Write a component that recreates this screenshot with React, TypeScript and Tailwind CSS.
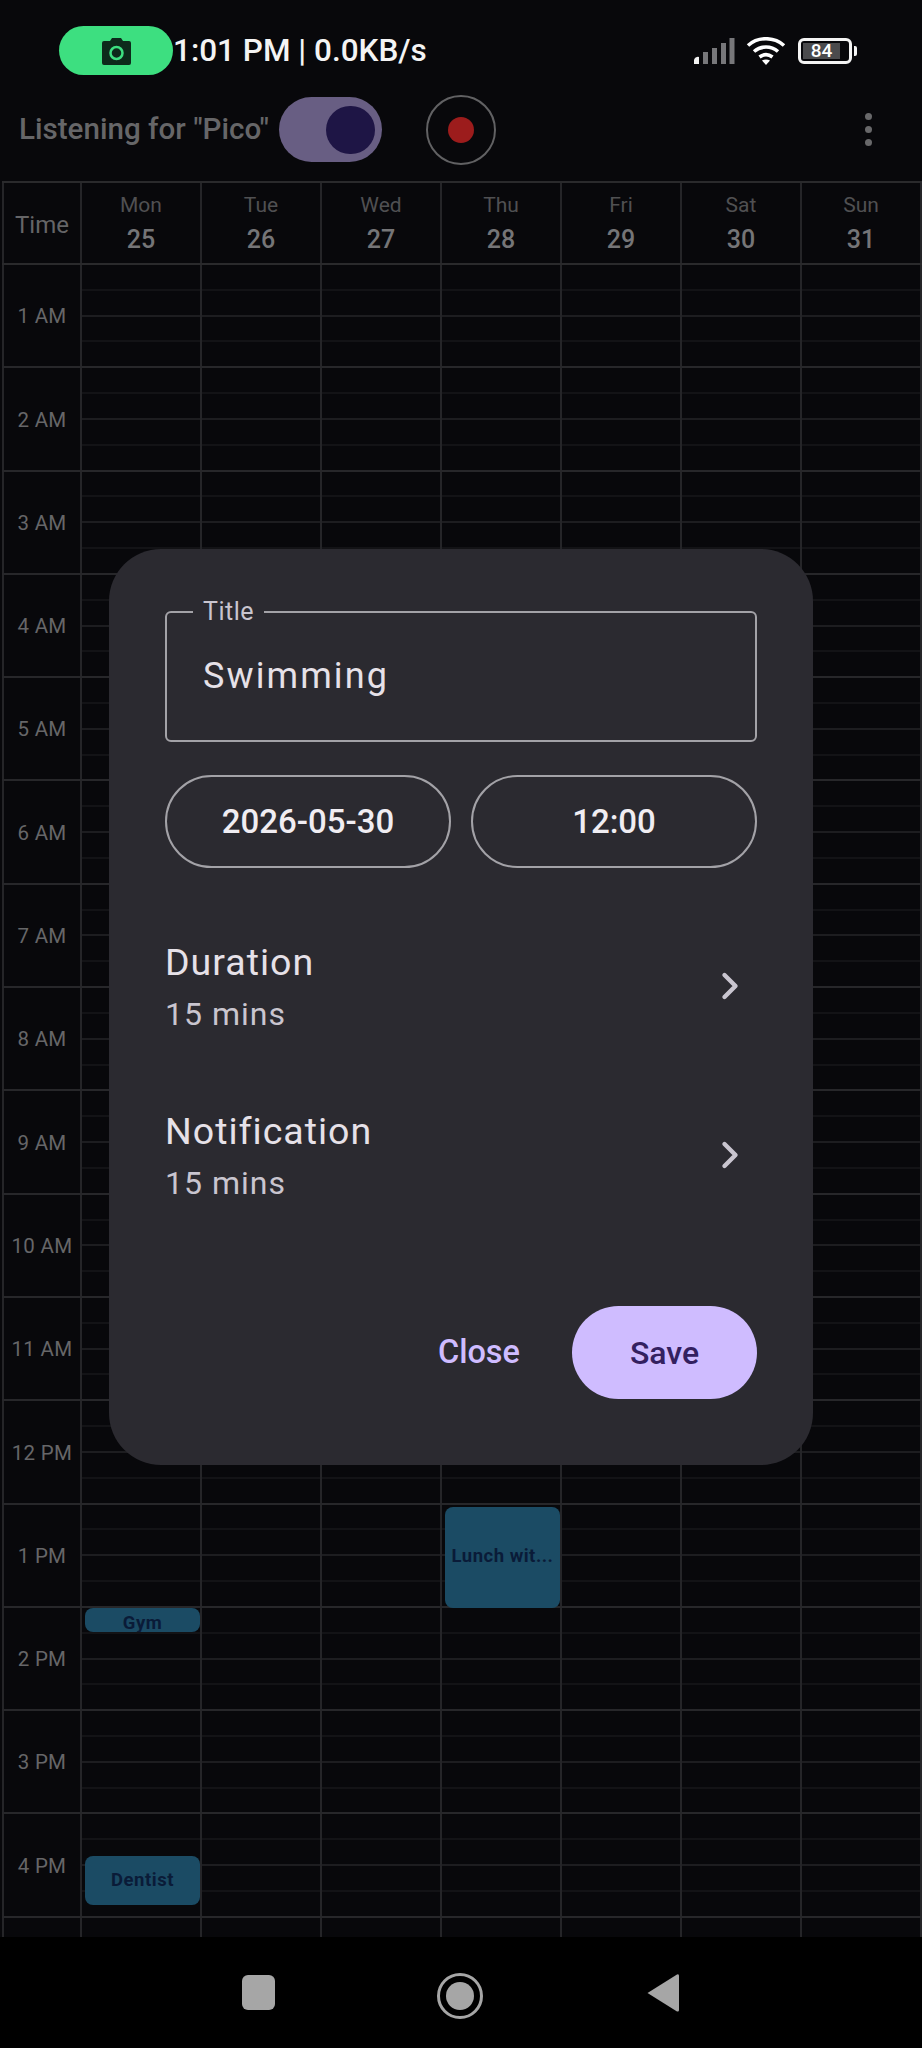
import { ChevronRight } from 'lucide-react'

const days = [
  ['Mon', '25'],
  ['Tue', '26'],
  ['Wed', '27'],
  ['Thu', '28'],
  ['Fri', '29'],
  ['Sat', '30'],
  ['Sun', '31'],
]

// the last row is cut by the nav bar before its label shows
const hours = [
  '1 AM', '2 AM', '3 AM', '4 AM', '5 AM', '6 AM', '7 AM', '8 AM',
  '9 AM', '10 AM', '11 AM', '12 PM', '1 PM', '2 PM', '3 PM', '4 PM', '',
]

function SignalIcon() {
  return (
    <svg width="42" height="27" viewBox="0 0 42 27">
      <path d="M1 26v-4a4 4 0 0 1 5-3v7z" fill="#f2f2f2" />
      <rect x="10" y="14" width="5" height="12" fill="#77777a" />
      <rect x="19" y="10" width="5" height="16" fill="#77777a" />
      <rect x="28" y="5" width="5" height="21" fill="#77777a" />
      <rect x="36.5" y="0" width="5" height="26" fill="#77777a" />
    </svg>
  )
}

function WifiIcon() {
  return (
    <svg width="40" height="28" viewBox="0 0 40 28" fill="none" stroke="#fff" strokeWidth="3.6">
      <path d="M2 8.5C12-.5 28-.5 38 8.5" />
      <path d="M8 14.5c7-6 17-6 24 0" />
      <path d="M13.5 20c4-3 9-3 13 0" />
      <path d="M20 28l-4-4.5c2.500-1.500 5.500-1.500 8 0z" fill="#fff" stroke="none" />
    </svg>
  )
}

function CameraIcon() {
  return (
    <svg width="31" height="28" viewBox="0 0 31 28">
      <path d="M3 4h6l2-3h9l2 3h6a2 2 0 0 1 2 2v20a2 2 0 0 1-2 2H3a2 2 0 0 1-2-2V6a2 2 0 0 1 2-2z" fill="#0d2a1b" />
      <circle cx="15.500" cy="16" r="6" fill="none" stroke="#3ddf80" strokeWidth="2.500" />
    </svg>
  )
}

function EventBlock({ title, className }: { title: string; className: string }) {
  return (
    <div className={`absolute z-10 flex justify-center overflow-hidden rounded-[8px] bg-[#1b4b64] text-[#0a1b38] text-[18.500px] font-bold tracking-[0.5px] ${className}`}>
      {title}
    </div>
  )
}

function DayCell({ hour, day }: { hour: number; day: number }) {
  return (
    <div className="relative flex h-full flex-col border-r-2 border-[#252528]">
      <div className="flex-1 border-b-2 border-[#131316]" />
      <div className="flex-1 border-b-2 border-[#1d1d20]" />
      <div className="flex-1 border-b-2 border-[#131316]" />
      <div className="flex-1" />
      {hour === 12 && day === 3 && (
        <EventBlock title="Lunch wit..." className="left-[3px] top-[2px] h-[101px] w-[115px] items-center" />
      )}
      {hour === 13 && day === 0 && (
        <EventBlock title="Gym" className="left-[3px] top-[0px] h-[24px] w-[115px] items-start pt-[4px] leading-[22px]" />
      )}
      {hour === 15 && day === 0 && (
        <EventBlock title="Dentist" className="left-[3px] top-[42px] h-[49px] w-[115px] items-center" />
      )}
    </div>
  )
}

function SettingRow({ label, value }: { label: string; value: string }) {
  return (
    <div className="flex h-[169px] items-start justify-between">
      <div className="flex flex-col">
        <span className="mt-[-5px] text-[37.500px] leading-[50px] tracking-[1px] text-[#e6e1e8]">{label}</span>
        <span className="mt-[7px] text-[32px] leading-[40px] tracking-[1px] text-[#c9c5cf]">{value}</span>
      </div>
      <ChevronRight className="mr-[5px] mt-[22px] text-[#c9c5cf]" size={44} strokeWidth={2.4} />
    </div>
  )
}

export default function App() {
  return (
    <div className="relative flex h-[2048px] w-[922px] flex-col overflow-hidden bg-[#08080b] font-['Roboto',sans-serif]">
      {/* status bar */}
      <div className="flex h-[78px] shrink-0 items-start pl-[59px] pr-[65px] pt-[26px]">
        <div className="flex h-[49px] w-[114px] items-center justify-center rounded-[25px] bg-[#3ddf80]">
          <CameraIcon />
        </div>
        <span className="pt-[1px] text-[31.500px] font-medium leading-[48px] text-[#f4f4f4]">1:01 PM | 0.0KB/s</span>
        <div className="ml-auto flex items-center pt-[11px]">
          <SignalIcon />
          <div className="ml-[11px]">
            <WifiIcon />
          </div>
          <div className="relative ml-[12px] flex h-[26px] w-[54px] items-center rounded-[6px] border-[3px] border-[#f4f4f4] pl-[2px]">
            <div className="flex h-[16px] w-[37px] items-center justify-center bg-[#4b4b4d] text-[19px] font-medium text-white">84</div>
          </div>
          <div className="ml-[2px] h-[10px] w-[3px] rounded-r-[2px] bg-[#f4f4f4]" />
        </div>
      </div>

      {/* app bar */}
      <div className="flex h-[103px] shrink-0 items-center pl-[19px] pr-[50px]">
        <span className="text-[29.600px] font-medium text-[#666668]">Listening for "Pico"</span>
        <div className="ml-[10px] flex h-[65px] w-[103px] items-center justify-end rounded-full bg-[#685e83] pr-[7px]">
          <div className="h-[48px] w-[49px] rounded-full bg-[#1e1545]" />
        </div>
        <div className="ml-[44px] flex h-[70px] w-[70px] items-center justify-center rounded-full border-2 border-[#616163]">
          <div className="h-[26px] w-[26px] rounded-full bg-[#9c1c1c]" />
        </div>
        <div className="ml-auto flex flex-col gap-[6px]">
          <div className="h-[7px] w-[7px] rounded-full bg-[#68686a]" />
          <div className="h-[7px] w-[7px] rounded-full bg-[#68686a]" />
          <div className="h-[7px] w-[7px] rounded-full bg-[#68686a]" />
        </div>
      </div>

      {/* week grid */}
      <div className="ml-[2px] min-h-0 flex-1 overflow-hidden border-t-2 border-[#2a2a2c]">
        <div className="grid h-[82px] grid-cols-[80px_repeat(7,120px)] border-b-2 border-[#2a2a2c]">
          <div className="flex items-center justify-center border-x-2 border-[#252528] pt-[3px] text-[24px] text-[#656567]">Time</div>
          {days.map(([name, num]) => (
            <div key={name} className="flex flex-col items-center border-r-2 border-[#252528] pt-[8px]">
              <span className="text-[21px] leading-[28px] text-[#505052]">{name}</span>
              <span className="mt-[4px] text-[25px] font-medium leading-[34px] text-[#757577]">{num}</span>
            </div>
          ))}
        </div>
        {hours.map((label, hour) => (
          <div key={hour} className="grid h-[103.300px] grid-cols-[80px_repeat(7,120px)] border-b-2 border-[#27272a]">
            <div className="flex items-center justify-center border-x-2 border-[#252528] pt-[2px] text-[20.500px] tracking-[0.3px] text-[#666668]">
              {label}
            </div>
            {days.map(([name], day) => (
              <DayCell key={name} hour={hour} day={day} />
            ))}
          </div>
        ))}
      </div>

      {/* nav bar */}
      <div className="flex h-[111px] shrink-0 items-start bg-black pl-[242px] pt-[36px]">
        <div className="mt-[2px] h-[35px] w-[33px] rounded-[6px] bg-[#a6a6a6]" />
        <div className="ml-[162px] flex h-[46px] w-[46px] items-center justify-center rounded-full border-[3px] border-[#a6a6a6]">
          <div className="h-[28px] w-[28px] rounded-full bg-[#a6a6a6]" />
        </div>
        <svg className="ml-[163px]" width="33" height="40" viewBox="0 0 33 40">
          <path d="M31 1.500 L1.500 20 L31 38.500 Q33 39 33 37 V3 Q33 .5 31 1.500Z" fill="#a6a6a6" />
        </svg>
      </div>

      {/* edit dialog */}
      <div className="absolute left-[109px] top-[549px] z-20 h-[916px] w-[704px] rounded-[52px] bg-[#2b2a30] pl-[56px] pr-[56px] pt-[62px]">
        <div className="relative flex h-[131px] items-start rounded-[6px] border-2 border-[#a3a2a7] pl-[36px] pt-[39px]">
          <span className="absolute left-[26px] top-[-15px] bg-[#2b2a30] px-[10px] text-[25px] leading-[28px] tracking-[0.5px] text-[#c9c5cf]">Title</span>
          <span className="text-[36px] leading-[48px] tracking-[2.100px] text-[#e6e1e8]">Swimming</span>
        </div>
        <div className="mt-[33px] flex gap-[20px]">
          <div className="flex h-[93px] flex-1 items-center justify-center rounded-full border-2 border-[#a3a2a7] text-[33px] font-medium text-[#f0edf2]">2026-05-30</div>
          <div className="flex h-[93px] flex-1 items-center justify-center rounded-full border-2 border-[#a3a2a7] text-[33px] font-medium text-[#f0edf2]">12:00</div>
        </div>
        <div className="mt-[74px]">
          <SettingRow label="Duration" value="15 mins" />
          <SettingRow label="Notification" value="15 mins" />
        </div>
        <div className="mt-[26px] flex items-center justify-end">
          <span className="text-[32.500px] font-medium text-[#cfbcff]">Close</span>
          <div className="ml-[52px] flex h-[93px] w-[185px] items-center justify-center rounded-full bg-[#cfbcff] text-[32px] font-medium text-[#33205f]">Save</div>
        </div>
      </div>
    </div>
  )
}
